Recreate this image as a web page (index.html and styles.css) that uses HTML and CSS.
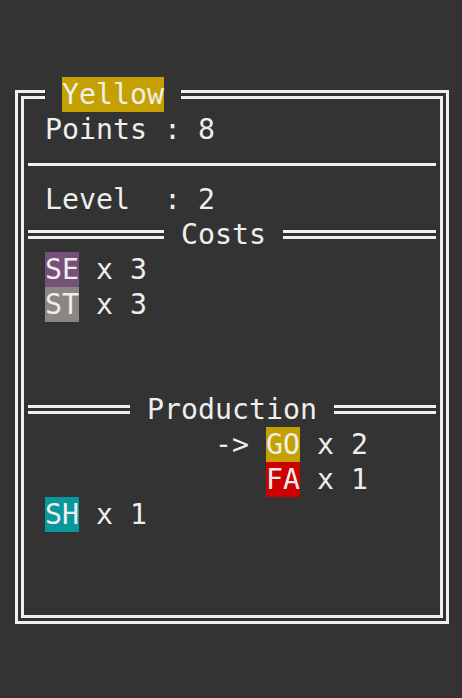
FILE: index.html
```html
<!DOCTYPE html>
<html>
<head>
<meta charset="utf-8">
<link rel="stylesheet" href="styles.css">
</head>
<body>
<div class="box">
  <div class="title"><span class="hl yellow">Yellow</span></div>
  <div class="row"> Points : 8</div>
  <div class="row sep"><span class="single"></span></div>
  <div class="row"> Level  : 2</div>
  <div class="row sep"><span class="dbl w8"></span><span class="label">Costs</span><span class="dbl grow"></span></div>
  <div class="row"> <span class="hl purple">SE</span> x 3</div>
  <div class="row"> <span class="hl gray">ST</span> x 3</div>
  <div class="row"> </div>
  <div class="row"> </div>
  <div class="row sep"><span class="dbl w6"></span><span class="label">Production</span><span class="dbl grow"></span></div>
  <div class="row">           -&gt; <span class="hl yellow">GO</span> x 2</div>
  <div class="row">              <span class="hl red">FA</span> x 1</div>
  <div class="row"> <span class="hl teal">SH</span> x 1</div>
</div>
</body>
</html>
```
FILE: styles.css
```css
html, body {
  margin: 0;
  padding: 0;
  background: #333333;
}
body {
  font-family: "DejaVu Sans Mono", monospace;
  font-size: 28.24px;
  color: #eeeeec;
}
.box {
  position: relative;
  box-sizing: border-box;
  margin: 90px 0 0 15px;
  width: 434px;
  height: 534px;
  border: 9px double #f0f0f0;
  padding: 13px 4px 0 4px;
}
.title {
  position: absolute;
  left: 21px;
  top: -22px;
  height: 35px;
  line-height: 35px;
  padding: 0 17px;
  background: #333333;
  white-space: pre;
}
.row {
  height: 35px;
  line-height: 35px;
  white-space: pre;
}
.sep {
  display: flex;
  align-items: center;
}
.single {
  flex: 1;
  height: 3px;
  background: #f0f0f0;
}
.dbl {
  box-sizing: border-box;
  height: 9px;
  border-top: 3px solid #f0f0f0;
  border-bottom: 3px solid #f0f0f0;
}
.w8 { width: 136px; }
.w6 { width: 102px; }
.grow { flex: 1; }
.label {
  padding: 0 17px;
}
.hl {
  display: inline-block;
  height: 35px;
  line-height: 35px;
  vertical-align: top;
}
.yellow { background: #c4a000; }
.purple { background: #75507b; }
.gray { background: #8b8681; }
.red { background: #cc0000; }
.teal { background: #06989a; }
```
